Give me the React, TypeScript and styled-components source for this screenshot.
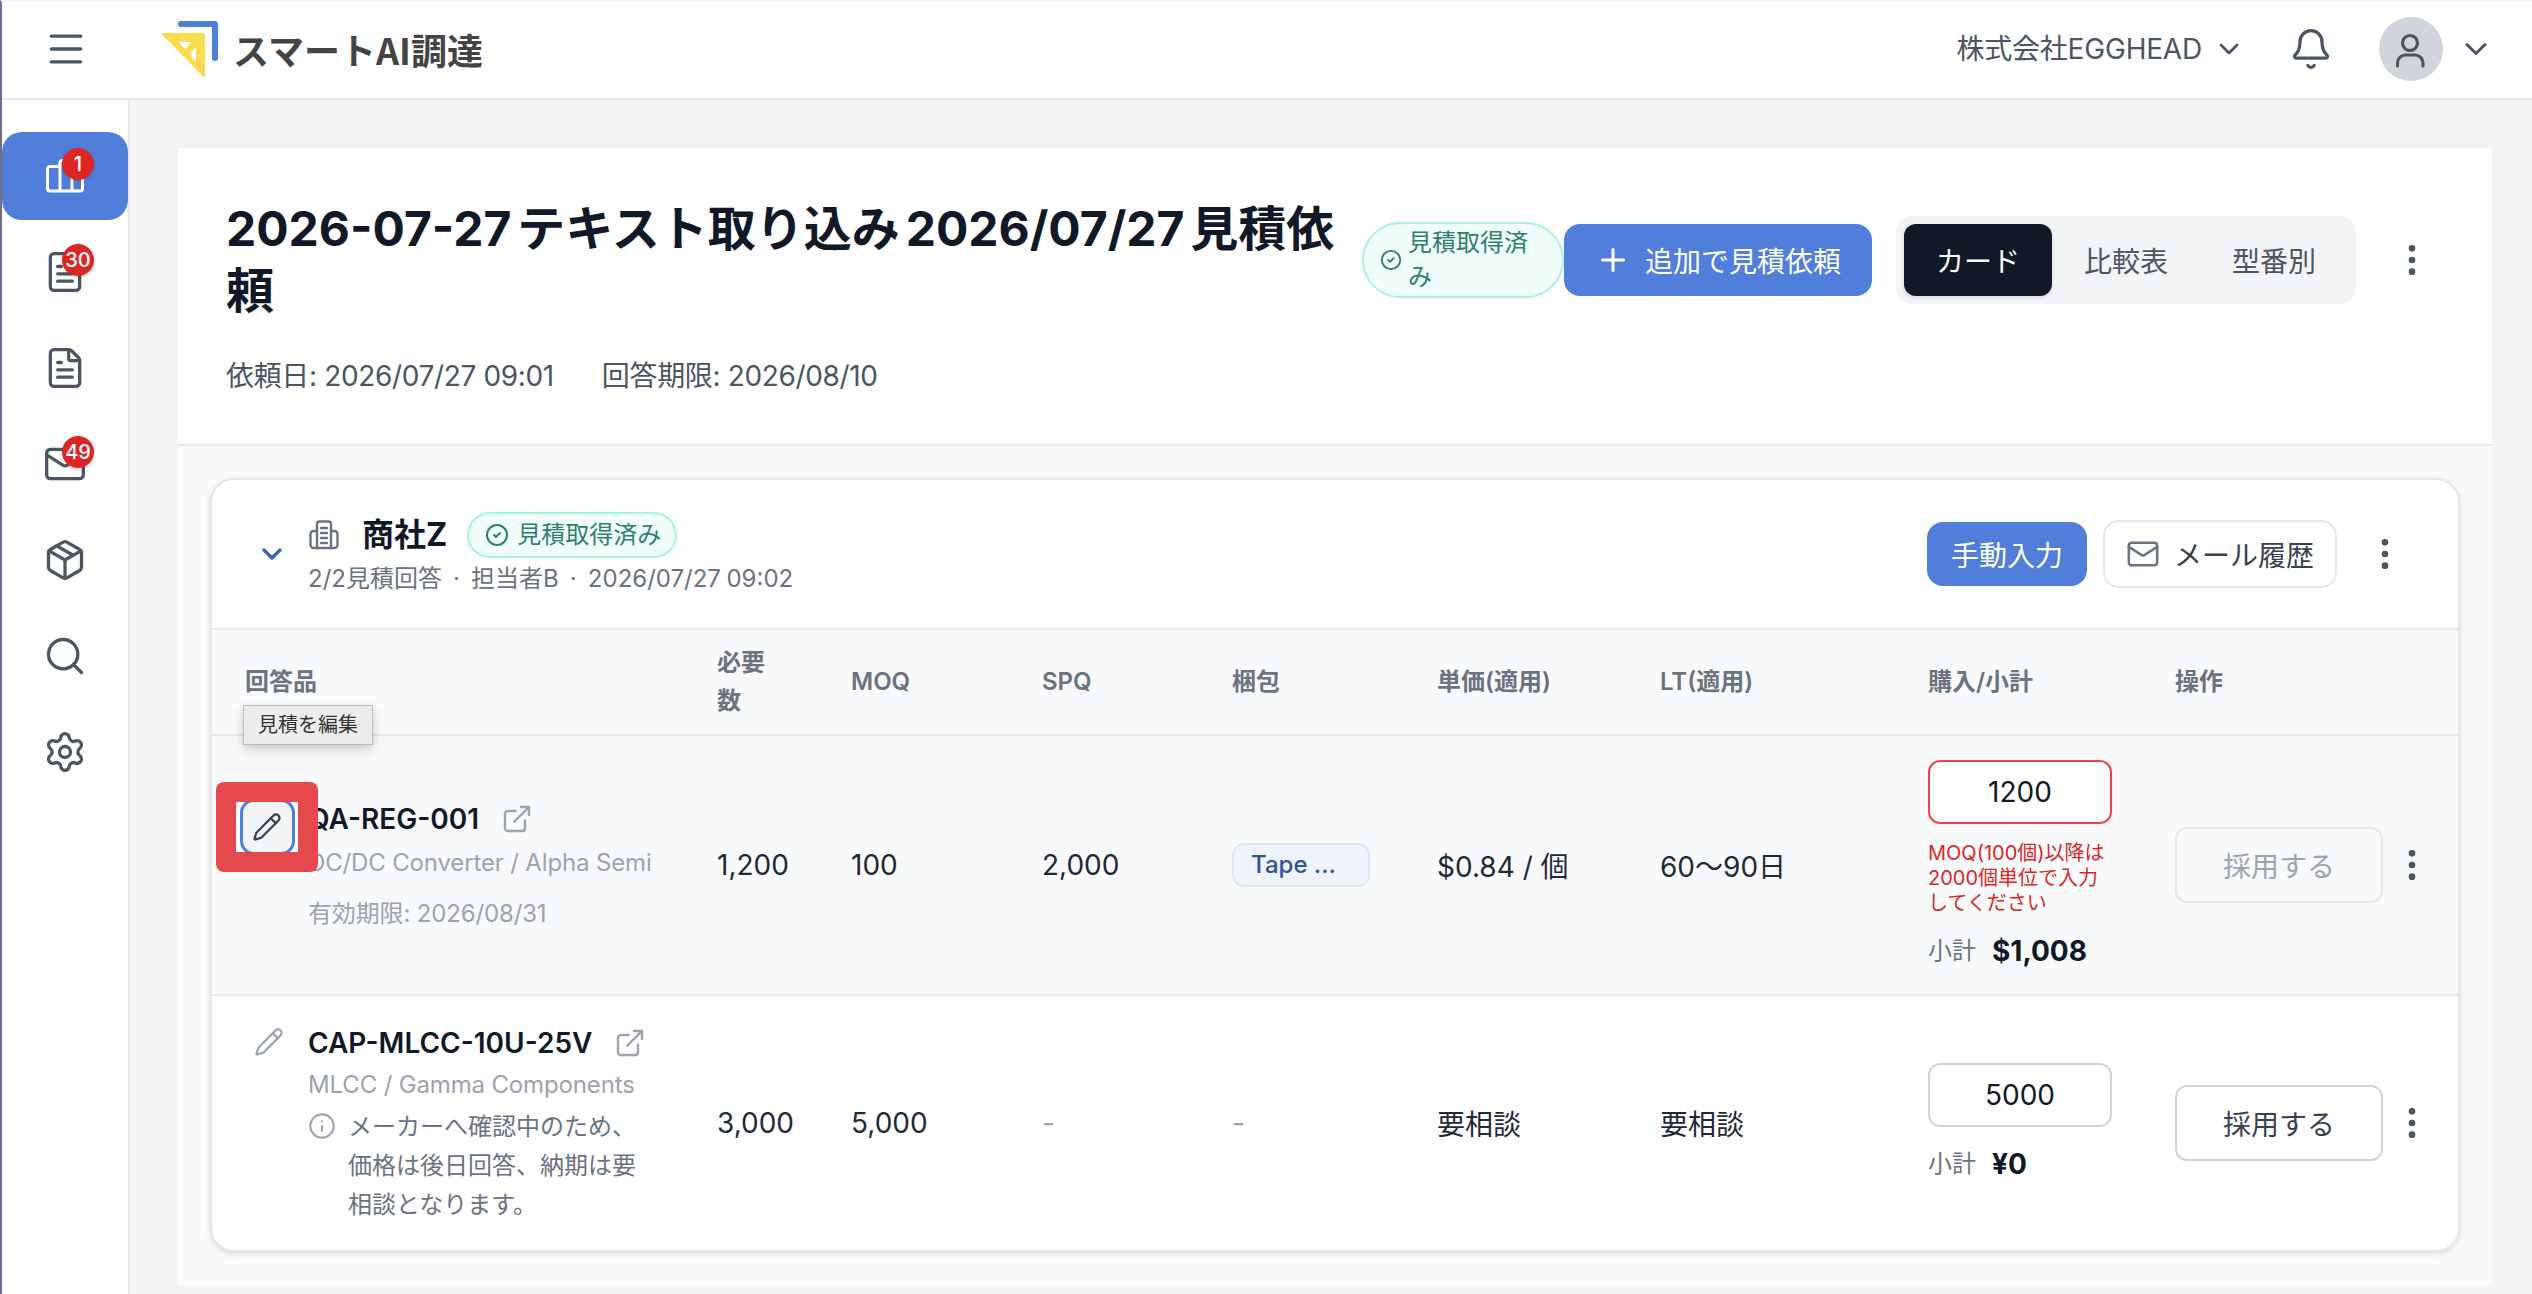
import React from 'react'
import styled, { createGlobalStyle } from 'styled-components'
import {
  Bell,
  ChevronDown,
  CircleCheck,
  EllipsisVertical,
  ExternalLink,
  FileText,
  Info,
  Mail,
  Menu,
  Package,
  Pencil,
  Plus,
  Search,
  Settings,
} from 'lucide-react'

const colors = {
  blue: '#527edb',
  ink: '#111827',
  text: '#1f2937',
  gray7: '#374151',
  gray6: '#4b5563',
  gray5: '#6b7280',
  gray4: '#9ca3af',
  gray3: '#d1d5db',
  gray2: '#e5e7eb',
  gray1: '#f3f4f6',
  gray0: '#f9fafb',
  red: '#dc2626',
}

const GRID = '505px 134px 191px 190px 205px 223px 268px 247px 1fr'

const GlobalStyle = createGlobalStyle`
  html, body {
    margin: 0;
    padding: 0;
    background: ${colors.gray1};
  }
  * {
    box-sizing: border-box;
  }
  body {
    font-family: Inter, "Noto Sans CJK JP", sans-serif;
    color: ${colors.text};
  }
`

const S = {
  Shell: styled.div`
    width: 2532px;
    height: 1294px;
    display: flex;
    flex-direction: column;
    border-left: 2px solid #6f6f88;
    border-top: 2px solid ${colors.gray1};
    overflow: hidden;
  `,
  Header: styled.header`
    height: 98px;
    flex: none;
    display: flex;
    align-items: center;
    padding: 0 38px 2px 42px;
    background: #fff;
    border-bottom: 2px solid ${colors.gray2};
    color: ${colors.gray6};
  `,
  Logo: styled.div`
    display: flex;
    align-items: center;
    gap: 15px;
    margin-left: 74px;
  `,
  LogoText: styled.span`
    font-family: "Noto Sans CJK JP", sans-serif;
    font-size: 36px;
    font-weight: 700;
    line-height: 44px;
    color: #444444;
  `,
  HeaderRight: styled.div`
    margin-left: auto;
    display: flex;
    align-items: center;
  `,
  Company: styled.span`
    font-size: 28px;
    line-height: 40px;
    color: ${colors.gray6};
    margin-right: 11px;
    letter-spacing: -0.2px;
  `,
  BellWrap: styled.div`
    display: flex;
    margin: 0 46px 0 44px;
  `,
  Avatar: styled.div`
    width: 64px;
    height: 64px;
    border-radius: 50%;
    background: ${colors.gray3};
    display: flex;
    align-items: center;
    justify-content: center;
    margin-right: 15px;
  `,
  Body: styled.div`
    flex: 1;
    display: flex;
    min-height: 0;
  `,
  Sidebar: styled.nav`
    width: 128px;
    flex: none;
    display: flex;
    flex-direction: column;
    gap: 8px;
    padding-top: 32px;
    background: #fff;
    border-right: 2px solid ${colors.gray2};
  `,
  NavItem: styled.div<{ $active?: boolean }>`
    position: relative;
    width: 126px;
    height: 88px;
    display: flex;
    align-items: center;
    justify-content: center;
    border-radius: 20px;
    background: ${p => (p.$active ? colors.blue : 'transparent')};
    color: ${p => (p.$active ? '#fff' : colors.gray6)};
  `,
  NavBadge: styled.span`
    position: absolute;
    left: 60px;
    top: 16px;
    width: 32px;
    height: 32px;
    border-radius: 50%;
    background: ${colors.red};
    color: #fff;
    font-size: 20px;
    font-weight: 500;
    line-height: 32px;
    text-align: center;
    box-shadow: 0 2px 4px rgba(0, 0, 0, 0.15);
  `,
  Main: styled.main`
    flex: 1;
    min-width: 0;
    padding: 48px 40px 8px 48px;
    background: ${colors.gray1};
    display: flex;
  `,
  Panel: styled.section`
    flex: 1;
    min-width: 0;
    display: flex;
    flex-direction: column;
    background: ${colors.gray0};
  `,
  PanelHead: styled.div`
    background: #fff;
    padding: 50px 48px 48px 48px;
    border-bottom: 2px solid ${colors.gray2};
  `,
  TitleRow: styled.div`
    display: flex;
    align-items: center;
  `,
  Title: styled.h1`
    flex: 1;
    min-width: 0;
    margin: 0;
    font-size: 48px;
    font-weight: 700;
    line-height: 62px;
    word-spacing: -5.5px;
    color: ${colors.ink};
  `,
  StatusPill: styled.span<{ $wide?: boolean }>`
    flex: none;
    width: ${p => (p.$wide ? '210px' : '202px')};
    display: inline-flex;
    align-items: center;
    gap: ${p => (p.$wide ? '8px' : '6px')};
    padding: ${p => (p.$wide ? '4px 0 4px 16px' : '2px 16px 2px 16px')};
    border: 2px solid #a7f3e0;
    border-radius: 999px;
    background: #f0fdf9;
    color: #2f7f6f;
    font-size: 24px;
    line-height: 34px;
    white-space: ${p => (p.$wide ? 'nowrap' : 'normal')};
  `,
  PrimaryButton: styled.button<{ $width: number; $height: number }>`
    flex: none;
    width: ${p => p.$width}px;
    height: ${p => p.$height}px;
    display: flex;
    align-items: center;
    justify-content: center;
    gap: 14px;
    border: 0;
    border-radius: 16px;
    background: ${colors.blue};
    color: #fff;
    font: inherit;
    font-size: 28px;
    padding: 0;
  `,
  Segments: styled.div`
    flex: none;
    display: flex;
    padding: 8px;
    margin-left: 24px;
    border-radius: 16px;
    background: ${colors.gray1};
  `,
  Segment: styled.div<{ $active?: boolean }>`
    width: 148px;
    height: 72px;
    display: flex;
    align-items: center;
    justify-content: center;
    border-radius: 12px;
    font-size: 28px;
    color: ${p => (p.$active ? '#fff' : colors.gray6)};
    background: ${p => (p.$active ? colors.ink : 'transparent')};
    box-shadow: ${p => (p.$active ? '0 2px 4px rgba(0,0,0,.12)' : 'none')};
  `,
  Kebab: styled.div<{ $width: number; $ml?: number }>`
    flex: none;
    width: ${p => p.$width}px;
    margin-left: ${p => p.$ml ?? 0}px;
    display: flex;
    justify-content: center;
    color: ${colors.gray6};
  `,
  Meta: styled.div`
    margin-top: 34px;
    display: flex;
    gap: 48px;
    font-size: 28px;
    line-height: 40px;
    letter-spacing: -0.35px;
    color: ${colors.gray6};
  `,
  PanelBody: styled.div`
    flex: 1;
    padding: 32px;
  `,
  Card: styled.div`
    background: #fff;
    border: 2px solid ${colors.gray2};
    border-radius: 24px;
    box-shadow: 0 2px 6px rgba(0, 0, 0, 0.12);
  `,
  CardHead: styled.div`
    height: 148px;
    display: flex;
    align-items: center;
    padding: 0 25px 0 44px;
  `,
  Chevron: styled.div`
    display: flex;
    width: 52px;
    color: #3b64b8;
  `,
  Supplier: styled.div`
    display: flex;
    flex-direction: column;
    gap: 3px;
  `,
  SupplierLine: styled.div`
    display: flex;
    align-items: center;
    color: ${colors.gray5};
  `,
  SupplierName: styled.span`
    margin: 0 20px 0 22px;
    font-size: 32px;
    font-weight: 700;
    line-height: 44px;
    color: ${colors.ink};
  `,
  SupplierSub: styled.div`
    font-size: 24px;
    line-height: 36px;
    word-spacing: -1.2px;
    color: ${colors.gray5};
    white-space: pre;
  `,
  CardActions: styled.div`
    margin-left: auto;
    display: flex;
    align-items: center;
  `,
  OutlineButton: styled.button`
    height: 68px;
    width: 234px;
    margin-left: 16px;
    display: flex;
    align-items: center;
    justify-content: center;
    gap: 14px;
    border: 2px solid ${colors.gray2};
    border-radius: 16px;
    background: #fff;
    color: ${colors.gray7};
    font: inherit;
    font-size: 28px;
    padding: 0;
  `,
  MailIcon: styled.span`
    display: flex;
    color: ${colors.gray5};
  `,
  TableHead: styled.div`
    height: 108px;
    display: grid;
    grid-template-columns: ${GRID};
    align-items: center;
    background: ${colors.gray0};
    border-top: 2px solid ${colors.gray2};
    border-bottom: 2px solid ${colors.gray2};
  `,
  Th: styled.div<{ $first?: boolean }>`
    padding-left: ${p => (p.$first ? '33px' : '0')};
    font-size: 24px;
    font-weight: 600;
    line-height: 38px;
    color: ${colors.gray5};
  `,
  NarrowHead: styled.div`
    width: 60px;
  `,
  Row: styled.div<{ $highlight?: boolean; $height: number }>`
    position: relative;
    height: ${p => p.$height}px;
    display: grid;
    grid-template-columns: ${GRID};
    align-items: center;
    background: ${p => (p.$highlight ? colors.gray0 : 'transparent')};
    border-bottom: ${p => (p.$highlight ? `2px solid ${colors.gray2}` : '0')};
    font-size: 28px;
    color: ${colors.text};
  `,
  ItemCell: styled.div`
    display: flex;
    padding-left: 33px;
  `,
  EditSlot: styled.div`
    flex: none;
    width: 63px;
    padding: 4px 0 0 0;
    color: ${colors.gray4};
  `,
  ItemInfo: styled.div`
    min-width: 0;
    flex: 1;
  `,
  ItemName: styled.div`
    display: flex;
    align-items: center;
    gap: 22px;
    font-size: 28px;
    font-weight: 600;
    line-height: 40px;
    color: ${colors.ink};
  `,
  LinkIcon: styled.span`
    display: flex;
    color: ${colors.gray4};
  `,
  ItemSub: styled.div<{ $mt: number }>`
    margin-top: ${p => p.$mt}px;
    font-size: 24px;
    line-height: 36px;
    letter-spacing: -0.15px;
    color: ${colors.gray4};
  `,
  Note: styled.div`
    display: flex;
    margin-top: 4px;
    gap: 12px;
    font-size: 24px;
    line-height: 39px;
    color: ${colors.gray5};
  `,
  NoteIcon: styled.span`
    flex: none;
    display: flex;
    height: 39px;
    align-items: center;
    color: ${colors.gray4};
  `,
  NoteText: styled.div`
    width: 292px;
  `,
  Dash: styled.span`
    color: ${colors.gray4};
  `,
  PackTag: styled.span`
    display: block;
    width: 138px;
    height: 44px;
    padding-left: 17px;
    border: 2px solid #dbe7fb;
    border-radius: 12px;
    background: #eff4fc;
    color: #2f52a0;
    font-size: 24px;
    font-weight: 500;
    line-height: 40px;
  `,
  Purchase: styled.div`
    display: flex;
    flex-direction: column;
  `,
  QtyBox: styled.div<{ $error?: boolean }>`
    width: 184px;
    height: 64px;
    display: flex;
    align-items: center;
    justify-content: center;
    background: #fff;
    border: 2px solid ${p => (p.$error ? '#ef4444' : colors.gray3)};
    border-radius: 12px;
    font-size: 28px;
    color: ${colors.ink};
  `,
  ErrorText: styled.div`
    width: 184px;
    margin-top: 17px;
    font-size: 20px;
    line-height: 25px;
    color: ${colors.red};
  `,
  Subtotal: styled.div<{ $mt: number }>`
    margin-top: ${p => p.$mt}px;
    display: flex;
    align-items: center;
    gap: 16px;
    line-height: 40px;
  `,
  SubtotalLabel: styled.span`
    font-size: 24px;
    color: ${colors.gray5};
  `,
  SubtotalValue: styled.span`
    font-size: 28px;
    font-weight: 700;
    color: ${colors.ink};
  `,
  OpCell: styled.div`
    display: flex;
    align-items: center;
  `,
  AdoptButton: styled.button<{ $disabled?: boolean }>`
    width: 208px;
    height: 76px;
    border-radius: 12px;
    border: 2px solid ${p => (p.$disabled ? colors.gray2 : colors.gray3)};
    background: ${p => (p.$disabled ? colors.gray0 : '#fff')};
    color: ${p => (p.$disabled ? colors.gray4 : colors.gray7)};
    font: inherit;
    font-size: 28px;
    padding: 0;
  `,
  Tooltip: styled.div`
    position: absolute;
    z-index: 3;
    left: 31px;
    top: -31px;
    width: 130px;
    height: 40px;
    border: 1px solid #bdbdbd;
    background: #ececec;
    color: #333;
    font-size: 20px;
    line-height: 38px;
    text-align: center;
    box-shadow: 0 4px 10px rgba(0, 0, 0, 0.2);
  `,
  Marker: styled.div`
    position: absolute;
    z-index: 2;
    left: 4px;
    top: 46px;
    width: 102px;
    height: 90px;
    padding: 20px;
    border-radius: 8px;
    background: #e5484d;
  `,
  MarkerInner: styled.div`
    height: 50px;
    background: #fff;
    overflow: hidden;
    display: flex;
    align-items: center;
    justify-content: center;
  `,
  FocusRing: styled.div`
    flex: none;
    width: 55px;
    height: 56px;
    display: flex;
    align-items: center;
    justify-content: center;
    border: 3px solid ${colors.blue};
    border-radius: 14px;
    background: ${colors.gray1};
    color: ${colors.gray7};
  `,
}

const sw = 1.8

const LogoMark = () => (
  <svg width="56" height="56" viewBox="0 0 56 56" fill="none">
    <path d="M19 3H53V37" stroke="#4f7fdc" strokeWidth="6" strokeLinecap="round" strokeLinejoin="round" />
    <path
      fillRule="evenodd"
      fill="#fbdc4e"
      stroke="#fbdc4e"
      strokeWidth="2"
      strokeLinejoin="round"
      d="M1 13H42V55ZM15 20L23 30L32 20ZM35 24L26 33L35 44Z"
    />
  </svg>
)

const BuildingIcon = () => (
  <svg width="32" height="32" viewBox="0 0 32 32" fill="none" stroke="currentColor" strokeWidth="2.4" strokeLinecap="round">
    <path d="M9 29V5a2.5 2.5 0 0 1 2.5-2.5h9A2.5 2.5 0 0 1 23 5v24" />
    <path d="M9 12H5.500A3 3 0 0 0 2.500 15v11a3 3 0 0 0 3 3h21a3 3 0 0 0 3-3V15a3 3 0 0 0-3-3H23" />
    <path d="M13 9h6M13 14h6M13 19h6M13 24h6" />
  </svg>
)

const ChartIcon = () => (
  <svg width="38" height="36" viewBox="0 0 38 36" fill="none" stroke="currentColor" strokeWidth="3" strokeLinejoin="round">
    <path d="M14 33H4a2.500 2.500 0 0 1-2.500-2.500V11A2.500 2.500 0 0 1 4 8.500h10" />
    <path d="M14 33V5a2.500 2.500 0 0 1 2.500-2.500h7A2.500 2.500 0 0 1 26 5v28" />
    <path d="M14 33h20a2.500 2.500 0 0 0 2.500-2.500V17A2.500 2.500 0 0 0 34 14.500h-8" />
  </svg>
)

const UserIcon = () => (
  <svg width="32" height="40" viewBox="0 0 32 40" fill="none" stroke="#4b5563" strokeWidth="3.2" strokeLinecap="round">
    <circle cx="15" cy="14" r="7.500" />
    <path d="M2.500 37v-3a8 8 0 0 1 8-8h9.500a8 8 0 0 1 8 8v3" />
  </svg>
)

const navItems = [
  { icon: <ChartIcon />, badge: '1', active: true },
  { icon: <FileText size={44} strokeWidth={sw} />, badge: '30' },
  { icon: <FileText size={44} strokeWidth={sw} /> },
  { icon: <Mail size={44} strokeWidth={sw} />, badge: '49' },
  { icon: <Package size={44} strokeWidth={sw} /> },
  { icon: <Search size={44} strokeWidth={sw} /> },
  { icon: <Settings size={44} strokeWidth={sw} /> },
]

const headers = ['MOQ', 'SPQ', '梱包', '単価(適用)', 'LT(適用)', '購入/小計', '操作']

export default function App() {
  return (
    <>
      <GlobalStyle />
      <S.Shell>
        <S.Header>
          <Menu size={44} strokeWidth={sw} />
          <S.Logo>
            <LogoMark />
            <S.LogoText>スマートAI調達</S.LogoText>
          </S.Logo>
          <S.HeaderRight>
            <S.Company>株式会社EGGHEAD</S.Company>
            <ChevronDown size={32} strokeWidth={2} />
            <S.BellWrap>
              <Bell size={44} strokeWidth={sw} />
            </S.BellWrap>
            <S.Avatar>
              <UserIcon />
            </S.Avatar>
            <ChevronDown size={36} strokeWidth={2} />
          </S.HeaderRight>
        </S.Header>
        <S.Body>
          <S.Sidebar>
            {navItems.map((item, i) => (
              <S.NavItem key={i} $active={item.active}>
                {item.icon}
                {item.badge && <S.NavBadge>{item.badge}</S.NavBadge>}
              </S.NavItem>
            ))}
          </S.Sidebar>
          <S.Main>
            <S.Panel>
              <S.PanelHead>
                <S.TitleRow>
                  <S.Title>2026-07-27 テキスト取り込み 2026/07/27 見積依頼</S.Title>
                  <S.StatusPill>
                    <CircleCheck size={22} strokeWidth={2} style={{ flex: 'none' }} />
                    <span>見積取得済み</span>
                  </S.StatusPill>
                  <S.PrimaryButton $width={308} $height={72}>
                    <Plus size={36} strokeWidth={2} />
                    追加で見積依頼
                  </S.PrimaryButton>
                  <S.Segments>
                    <S.Segment $active>カード</S.Segment>
                    <S.Segment>比較表</S.Segment>
                    <S.Segment>型番別</S.Segment>
                  </S.Segments>
                  <S.Kebab $width={64} $ml={24}>
                    <EllipsisVertical size={40} strokeWidth={2} />
                  </S.Kebab>
                </S.TitleRow>
                <S.Meta>
                  <span>依頼日: 2026/07/27 09:01</span>
                  <span>回答期限: 2026/08/10</span>
                </S.Meta>
              </S.PanelHead>
              <S.PanelBody>
                <S.Card>
                  <S.CardHead>
                    <S.Chevron>
                      <ChevronDown size={32} strokeWidth={2.6} />
                    </S.Chevron>
                    <S.Supplier>
                      <S.SupplierLine>
                        <BuildingIcon />
                        <S.SupplierName>商社Z</S.SupplierName>
                        <S.StatusPill $wide>
                          <CircleCheck size={24} strokeWidth={2} style={{ flex: 'none' }} />
                          <span>見積取得済み</span>
                        </S.StatusPill>
                      </S.SupplierLine>
                      <S.SupplierSub>{'2/2見積回答  ·  担当者B  ·  2026/07/27 09:02'}</S.SupplierSub>
                    </S.Supplier>
                    <S.CardActions>
                      <S.PrimaryButton $width={160} $height={64}>
                        手動入力
                      </S.PrimaryButton>
                      <S.OutlineButton>
                        <S.MailIcon>
                          <Mail size={34} strokeWidth={1.8} />
                        </S.MailIcon>
                        メール履歴
                      </S.OutlineButton>
                      <S.Kebab $width={96}>
                        <EllipsisVertical size={40} strokeWidth={2} />
                      </S.Kebab>
                    </S.CardActions>
                  </S.CardHead>
                  <S.TableHead>
                    <S.Th $first>回答品</S.Th>
                    <S.Th>
                      <S.NarrowHead>必要数</S.NarrowHead>
                    </S.Th>
                    {headers.map(h => (
                      <S.Th key={h}>{h}</S.Th>
                    ))}
                  </S.TableHead>
                  <S.Row $highlight $height={260}>
                    <S.Tooltip>見積を編集</S.Tooltip>
                    <S.Marker>
                      <S.MarkerInner>
                        <S.FocusRing>
                          <Pencil size={30} strokeWidth={1.8} />
                        </S.FocusRing>
                      </S.MarkerInner>
                    </S.Marker>
                    <S.ItemCell>
                      <S.EditSlot />
                      <S.ItemInfo>
                        <S.ItemName>
                          QA-REG-001
                          <S.LinkIcon>
                            <ExternalLink size={32} strokeWidth={1.8} />
                          </S.LinkIcon>
                        </S.ItemName>
                        <S.ItemSub $mt={6}>DC/DC Converter / Alpha Semi</S.ItemSub>
                        <S.ItemSub $mt={15}>有効期限: 2026/08/31</S.ItemSub>
                      </S.ItemInfo>
                    </S.ItemCell>
                    <div>1,200</div>
                    <div>100</div>
                    <div>2,000</div>
                    <div>
                      <S.PackTag>Tape ...</S.PackTag>
                    </div>
                    <div>$0.84 / 個</div>
                    <div>60〜90日</div>
                    <S.Purchase>
                      <S.QtyBox $error>1200</S.QtyBox>
                      <S.ErrorText>MOQ(100個)以降は2000個単位で入力してください</S.ErrorText>
                      <S.Subtotal $mt={15}>
                        <S.SubtotalLabel>小計</S.SubtotalLabel>
                        <S.SubtotalValue>$1,008</S.SubtotalValue>
                      </S.Subtotal>
                    </S.Purchase>
                    <S.OpCell>
                      <S.AdoptButton $disabled>採用する</S.AdoptButton>
                      <S.Kebab $width={58}>
                        <EllipsisVertical size={40} strokeWidth={2} />
                      </S.Kebab>
                    </S.OpCell>
                  </S.Row>
                  <S.Row $height={254}>
                    <S.ItemCell>
                      <S.EditSlot>
                        <Pencil size={30} strokeWidth={1.8} style={{ marginLeft: 9 }} />
                      </S.EditSlot>
                      <S.ItemInfo>
                        <S.ItemName>
                          CAP-MLCC-10U-25V
                          <S.LinkIcon>
                            <ExternalLink size={32} strokeWidth={1.8} />
                          </S.LinkIcon>
                        </S.ItemName>
                        <S.ItemSub $mt={4}>MLCC / Gamma Components</S.ItemSub>
                        <S.Note>
                          <S.NoteIcon>
                            <Info size={28} strokeWidth={1.8} />
                          </S.NoteIcon>
                          <S.NoteText>メーカーへ確認中のため、価格は後日回答、納期は要相談となります。</S.NoteText>
                        </S.Note>
                      </S.ItemInfo>
                    </S.ItemCell>
                    <div>3,000</div>
                    <div>5,000</div>
                    <S.Dash>-</S.Dash>
                    <S.Dash>-</S.Dash>
                    <div>要相談</div>
                    <div>要相談</div>
                    <S.Purchase>
                      <S.QtyBox>5000</S.QtyBox>
                      <S.Subtotal $mt={17}>
                        <S.SubtotalLabel>小計</S.SubtotalLabel>
                        <S.SubtotalValue>¥0</S.SubtotalValue>
                      </S.Subtotal>
                    </S.Purchase>
                    <S.OpCell>
                      <S.AdoptButton>採用する</S.AdoptButton>
                      <S.Kebab $width={58}>
                        <EllipsisVertical size={40} strokeWidth={2} />
                      </S.Kebab>
                    </S.OpCell>
                  </S.Row>
                </S.Card>
              </S.PanelBody>
            </S.Panel>
          </S.Main>
        </S.Body>
      </S.Shell>
    </>
  )
}
